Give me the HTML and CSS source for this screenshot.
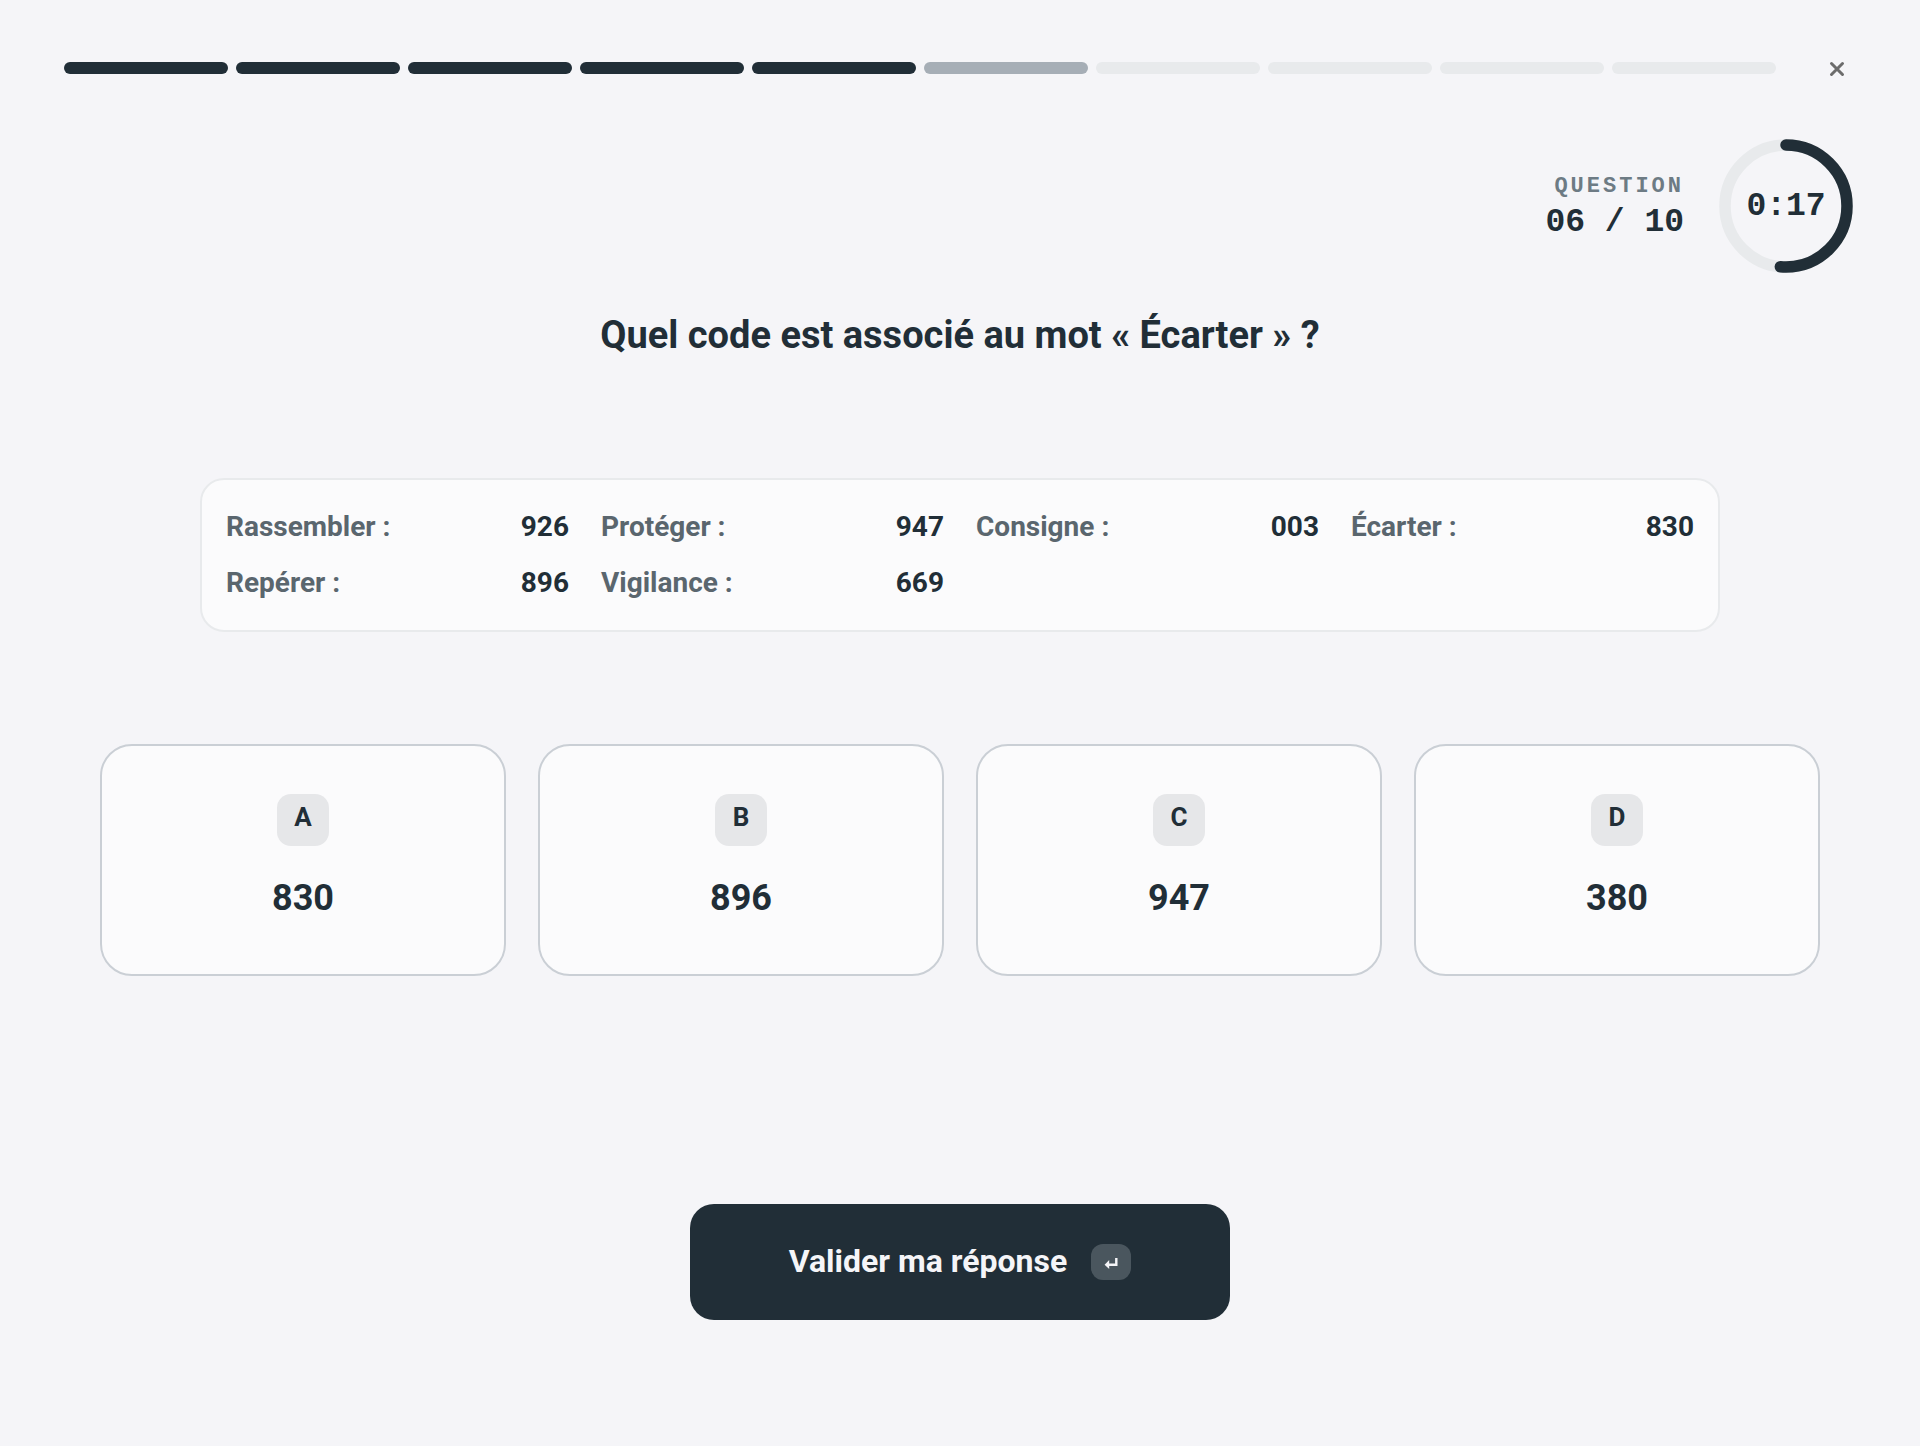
FILE: index.html
```html
<!DOCTYPE html>
<html lang="fr">
<head>
    <meta charset="UTF-8">
    <meta name="viewport" content="width=device-width, initial-scale=1.0">
    <title>Question 06 / 10</title>
    <link rel="stylesheet" href="styles.css">
</head>
<body>
    <header class="top-bar">
        <div class="progress" role="progressbar" aria-valuemin="0" aria-valuemax="10" aria-valuenow="6">
            <span class="step done"></span>
            <span class="step done"></span>
            <span class="step done"></span>
            <span class="step done"></span>
            <span class="step done"></span>
            <span class="step current"></span>
            <span class="step"></span>
            <span class="step"></span>
            <span class="step"></span>
            <span class="step"></span>
        </div>
        <button type="button" class="close-button" aria-label="Fermer">
            <svg width="16" height="16" viewBox="0 0 16 16" fill="none" stroke="currentColor" stroke-width="3" stroke-linecap="round">
                <path d="M2.5 2.5l11 11M13.5 2.5l-11 11"/>
            </svg>
        </button>
    </header>

    <div class="status">
        <div class="counter">
            <span class="counter-label">QUESTION</span>
            <span class="counter-value">06 / 10</span>
        </div>
        <div class="timer">
            <svg class="timer-ring" viewBox="0 0 136 136" fill="none" stroke-width="11.5">
                <circle class="ring-track" cx="68" cy="68" r="61"/>
                <circle class="ring-value" cx="68" cy="68" r="61" pathLength="100" stroke-dasharray="51.5 100" stroke-linecap="round" transform="rotate(-90 68 68)"/>
            </svg>
            <span class="timer-text">0:17</span>
        </div>
    </div>

    <main class="quiz">
        <h1 class="question">Quel code est associé au mot « Écarter » ?</h1>

        <dl class="codes">
            <div class="code"><dt>Rassembler :</dt><dd>926</dd></div>
            <div class="code"><dt>Protéger :</dt><dd>947</dd></div>
            <div class="code"><dt>Consigne :</dt><dd>003</dd></div>
            <div class="code"><dt>Écarter :</dt><dd>830</dd></div>
            <div class="code"><dt>Repérer :</dt><dd>896</dd></div>
            <div class="code"><dt>Vigilance :</dt><dd>669</dd></div>
        </dl>

        <div class="answers">
            <button type="button" class="answer"><span class="answer-key">A</span><span class="answer-value">830</span></button>
            <button type="button" class="answer"><span class="answer-key">B</span><span class="answer-value">896</span></button>
            <button type="button" class="answer"><span class="answer-key">C</span><span class="answer-value">947</span></button>
            <button type="button" class="answer"><span class="answer-key">D</span><span class="answer-value">380</span></button>
        </div>

        <button type="submit" class="submit-button">
            <span class="submit-text">Valider ma réponse</span>
            <span class="enter-key">
                <svg width="14" height="12" viewBox="0 0 14 12" fill="none" stroke="currentColor" stroke-width="2.4">
                    <path d="M12.3 1v6.8H3"/>
                    <path d="M5.2 3L.6 7.8l4.6 4.2z" fill="currentColor" stroke="none"/>
                </svg>
            </span>
        </button>
    </main>
</body>
</html>
```
FILE: styles.css
```css
:root {
    --bg: #f5f5f8;
    --dark: #212e37;
    --muted: #5a666e;
    --label: #6d7b84;
    --track: #e8eaec;
    --card: #fbfbfc;
    --border: #cacfd5;
}

* {
    margin: 0;
    padding: 0;
    box-sizing: border-box;
}

body {
    background: var(--bg);
    color: var(--dark);
    font-family: Roboto, sans-serif;
    font-weight: 700;
    min-height: 100vh;
    padding: 44px 64px;
}

button {
    font: inherit;
    color: inherit;
    cursor: pointer;
}

.top-bar {
    display: flex;
    align-items: center;
    gap: 36px;
}

.progress {
    flex: 1;
    display: flex;
    gap: 8px;
}

.step {
    flex: 1;
    height: 12px;
    border-radius: 6px;
    background: var(--track);
}

.step.done {
    background: var(--dark);
}

.step.current {
    background: #a6aeb6;
}

.close-button {
    width: 48px;
    height: 48px;
    margin-right: -4px;
    padding: 2px 0 0 2px;
    display: flex;
    align-items: center;
    justify-content: center;
    background: none;
    border: none;
    color: #6c6c6c;
}

.status {
    display: flex;
    justify-content: flex-end;
    align-items: center;
    gap: 34px;
    margin-top: 46px;
    padding-right: 2px;
}

.counter {
    display: flex;
    flex-direction: column;
    align-items: flex-end;
    padding-top: 2px;
    font-family: "Liberation Mono", monospace;
}

.counter-label {
    color: var(--label);
    font-size: 22px;
    line-height: 32px;
    letter-spacing: 3px;
}

.counter-value {
    font-size: 33px;
    line-height: 40px;
}

.timer {
    display: grid;
    place-items: center;
}

.timer > * {
    grid-area: 1 / 1;
}

.timer-ring {
    width: 136px;
    height: 136px;
}

.ring-track {
    stroke: var(--track);
}

.ring-value {
    stroke: var(--dark);
}

.timer-text {
    padding-top: 2px;
    font-family: "Liberation Mono", monospace;
    font-size: 33px;
    line-height: 40px;
}

.quiz {
    display: flex;
    flex-direction: column;
    align-items: center;
    padding: 36px;
}

.question {
    font-size: 38px;
    font-weight: 700;
    line-height: 50px;
    text-align: center;
}

.codes {
    width: 100%;
    max-width: 1520px;
    margin-top: 118px;
    padding: 25px 24px;
    display: grid;
    grid-template-columns: repeat(4, 1fr);
    gap: 12px 32px;
    background: var(--card);
    border: 2px solid var(--track);
    border-radius: 24px;
    font-size: 28px;
    line-height: 44px;
}

.code {
    display: flex;
    justify-content: space-between;
}

.code dt {
    color: var(--muted);
}

.answers {
    width: 100%;
    margin-top: 112px;
    display: grid;
    grid-template-columns: repeat(4, 1fr);
    gap: 32px;
}

.answer {
    display: flex;
    flex-direction: column;
    align-items: center;
    gap: 28px;
    padding: 48px 24px 52px;
    background: var(--card);
    border: 2px solid var(--border);
    border-radius: 32px;
}

.answer-key {
    width: 52px;
    height: 52px;
    border-radius: 14px;
    background: #e6e7e9;
    font-size: 26px;
    line-height: 46px;
}

.answer-value {
    font-size: 36px;
    line-height: 48px;
}

.submit-button {
    width: 540px;
    max-width: 100%;
    height: 116px;
    margin-top: 228px;
    display: flex;
    align-items: center;
    justify-content: center;
    gap: 24px;
    background: var(--dark);
    border: none;
    border-radius: 24px;
    color: var(--bg);
    font-size: 32px;
}

.submit-text {
    padding-bottom: 2px;
}

.enter-key {
    width: 40px;
    height: 36px;
    padding-top: 2px;
    display: flex;
    align-items: center;
    justify-content: center;
    background: #4a565e;
    border-radius: 12px;
}
```
